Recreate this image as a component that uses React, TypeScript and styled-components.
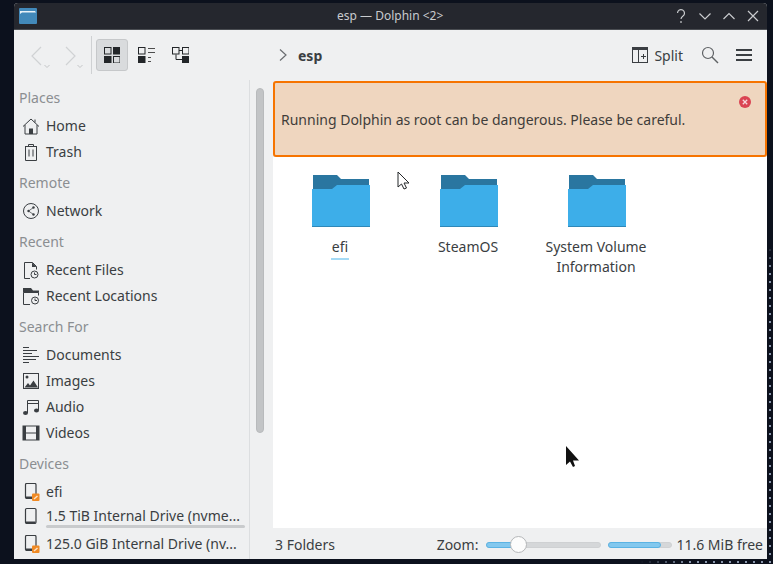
import React from 'react';
import styled, { createGlobalStyle } from 'styled-components';

const Global = createGlobalStyle`
  html, body { margin: 0; padding: 0; background: #0b101c; }
  #root { width: 773px; height: 564px; }
  * { box-sizing: border-box; }
`;

const Desktop = styled.div`
  position: relative;
  width: 773px;
  height: 564px;
  overflow: hidden;
  padding: 3px 6px 5px 14px;
  background-color: #0c111d;
  background-image:
    linear-gradient(180deg, #0c111d 245px, transparent 270px),
    linear-gradient(90deg, #0c111d 640px, transparent 690px),
    radial-gradient(circle at 2px 2px, #8a97ad 0.9px, transparent 1.4px);
  background-size: 100% 100%, 100% 100%, 8px 8px;
  font-family: "Noto Sans", sans-serif;
  font-size: 14px;
  color: #3a3e42;
`;

const Win = styled.div`
  display: flex;
  flex-direction: column;
  width: 753px;
  height: 556px;
  border-radius: 4px 4px 0 0;
  overflow: hidden;
  background: #eff0f1;
`;

const TitleBar = styled.header`
  position: relative;
  flex: 0 0 27px;
  display: flex;
  align-items: center;
  justify-content: space-between;
  padding: 0 5px 0 4px;
  background: #25272e;
  border-bottom: 1px solid #4a4d52;
`;

const TitleText = styled.div`
  position: absolute;
  left: 323px;
  top: 5px;
  font-size: 12px;
  line-height: 16px;
  color: #c9cbce;
`;

const WinButtons = styled.div`
  display: flex;
  gap: 6px;
  align-items: center;
`;

const Toolbar = styled.div`
  flex: 0 0 50px;
  display: flex;
  align-items: center;
  padding: 0 15px 0 14px;
`;

const NavButton = styled.div`
  position: relative;
  width: 32px;
  height: 32px;
  display: flex;
  align-items: center;
  justify-content: center;
`;

const NavGroup = styled.div`
  display: flex;
  width: 63px;
`;

const VSep = styled.div`
  width: 1px;
  height: 38px;
  background: #cfd1d3;
  margin: 0 4px 0 0;
`;

const ToolButton = styled.div<{ $active?: boolean }>`
  width: 32px;
  height: 32px;
  margin-right: 2px;
  display: flex;
  align-items: center;
  justify-content: center;
  border-radius: 3px;
  background: ${p => (p.$active ? '#d9dbdd' : 'transparent')};
  border: 1px solid ${p => (p.$active ? '#c6c8ca' : 'transparent')};
`;

const Crumbs = styled.div`
  display: flex;
  align-items: center;
  margin-left: 80px;
  flex: 1;
  gap: 10px;
`;

const CrumbText = styled.span`
  font-weight: 700;
  font-size: 14px;
  color: #3a3e42;
`;

const SplitButton = styled.div`
  display: flex;
  align-items: center;
  gap: 6px;
  margin-right: 4px;
  font-size: 14px;
`;

const IconSlot = styled.div`
  display: flex;
  align-items: center;
  margin-left: 14px;
`;

const MenuSlot = styled.div`
  display: flex;
  align-items: center;
  margin-left: 17px;
`;

const Body = styled.div`
  flex: 1;
  display: flex;
  min-height: 0;
`;

const Sidebar = styled.aside`
  width: 236px;
  border-right: 1px solid #dcdee0;
  overflow: hidden;
`;

const SectionHead = styled.div`
  height: 33px;
  padding: 8px 0 0 5px;
  line-height: 19px;
  font-size: 14px;
  color: #8b8e91;
`;

const Row = styled.div<{ $lift?: boolean }>`
  position: relative;
  height: 26px;
  display: flex;
  align-items: center;
  padding: ${p => (p.$lift ? '0 0 5px 8px' : '0 0 1px 8px')};
  gap: 6px;
  white-space: nowrap;
`;

const RowIcon = styled.div`
  width: 18px;
  height: 18px;
  flex: none;
  display: flex;
  align-items: center;
  justify-content: center;
`;

const CapacityBar = styled.div`
  position: absolute;
  left: 32px;
  right: 4px;
  bottom: 3px;
  height: 3px;
  border-radius: 2px;
  background: #c9cbcd;
`;

const ScrollTrack = styled.div`
  width: 20px;
  padding: 8px 6px 0 6px;
`;

const ScrollThumb = styled.div`
  width: 8px;
  height: 345px;
  border-radius: 4px;
  background: #c2c4c6;
  border: 1px solid #b8babc;
`;

const Main = styled.main`
  flex: 1;
  margin-left: 3px;
  display: flex;
  flex-direction: column;
  min-width: 0;
`;

const Banner = styled.div`
  position: relative;
  flex: 0 0 76px;
  margin-top: 1px;
  display: flex;
  align-items: center;
  padding: 0 0 0 6px;
  background: #efd6bf;
  border: 2px solid #f67400;
  border-radius: 3px;
`;

const BannerText = styled.span`
  margin-top: 1px;
  color: #3f3d3a;
`;

const CloseBadge = styled.div`
  position: absolute;
  right: 13px;
  top: 12px;
  width: 14px;
  height: 14px;
  display: flex;
`;

const Files = styled.div`
  flex: 1;
  background: #fff;
  display: flex;
  align-items: flex-start;
  padding: 18px 0 0 3px;
`;

const FileItem = styled.div`
  width: 128px;
  display: flex;
  flex-direction: column;
  align-items: center;
`;

const FolderSvg = styled.svg`
  margin-left: 4px;
`;

const FileLabel = styled.div<{ $focus?: boolean }>`
  margin-top: 10px;
  max-width: 116px;
  text-align: center;
  line-height: 20px;
  color: #3a3e42;
  position: relative;
  ${p =>
    p.$focus
      ? `&::after { content: ''; position: absolute; left: -1px; right: -1px; bottom: -3px; height: 2px; background: #a4daf5; }`
      : ''}
`;

const StatusBar = styled.footer`
  flex: 0 0 31px;
  display: flex;
  align-items: center;
  padding: 2px 4px 0 2px;
`;

const StatusText = styled.span`
  flex: 1;
`;

const ZoomLabel = styled.span`
  margin-right: 8px;
`;

const Track = styled.div<{ $w: number }>`
  position: relative;
  width: ${p => p.$w}px;
  height: 6px;
  border-radius: 3px;
  background: #d5d7d9;
  border: 1px solid #cfd1d3;
`;

const Fill = styled.div`
  position: absolute;
  left: -1px;
  top: -1px;
  bottom: -1px;
  border-radius: 3px;
  background: #83c8ee;
  border: 1px solid #5bb3e3;
`;

const Thumb = styled.div`
  position: absolute;
  left: 23px;
  top: -7px;
  width: 17px;
  height: 17px;
  border-radius: 50%;
  background: #fcfcfc;
  border: 1px solid #b5b7b9;
`;

const FreeGroup = styled.div`
  display: flex;
  align-items: center;
  margin-left: 7px;
  gap: 4px;
`;

const Cursor = styled.svg<{ $x: number; $y: number }>`
  position: absolute;
  left: ${p => p.$x}px;
  top: ${p => p.$y}px;
`;

const S = { fill: 'none', stroke: '#3a3e42', strokeWidth: 1 } as const;

const Drive = ({ badge }: { badge?: boolean }) => (
  <svg width="18" height="18" viewBox="0 0 18 18">
    <rect x="3.500" y={badge ? 0.5 : 1.5} width="10.500" height="15" rx="1.200" fill="none" stroke="#3a3e42" strokeWidth="1.200" />
    <path d={badge ? 'M4 13.500h9v2.500H4z' : 'M4 14.500h9.500V17H4z'} fill="#3a3e42" />
    {badge && (
      <>
        <rect x="10" y="10.500" width="7.500" height="7.500" rx="1" fill="#f08a24" />
        <path d="M12 16l3.500-3" stroke="#fde3c8" strokeWidth="1.500" />
      </>
    )}
  </svg>
);

const icons: Record<string, React.ReactNode> = {
  home: (
    <svg width="18" height="18" viewBox="0 0 18 18">
      <path d="M1 9.500 9 2l8 7.500M3 8v9h12V8M13 2.500v3" {...S} />
      <rect x="7" y="11.500" width="4" height="5.500" fill="#3a3e42" />
    </svg>
  ),
  trash: (
    <svg width="18" height="18" viewBox="0 0 18 18">
      <path d="M3 3.500h12M6.500 3.500V1.500h5v2M3.500 3.500v14h11v-14M7 6.500v7M11 6.500v7" {...S} />
    </svg>
  ),
  network: (
    <svg width="18" height="18" viewBox="0 0 18 18">
      <circle cx="9" cy="9" r="7.500" {...S} />
      <path d="M11.500 5.500 6.500 9l5 3.500" stroke="#3a3e42" strokeWidth="0.700" fill="none" />
      <circle cx="6.500" cy="9" r="1.200" fill="#3a3e42" />
      <circle cx="11.500" cy="5.500" r="1.200" fill="#3a3e42" />
      <circle cx="11.500" cy="12.500" r="1.200" fill="#3a3e42" />
    </svg>
  ),
  recentFile: (
    <svg width="18" height="18" viewBox="0 0 18 18">
      <path d="M8 17.500H2.500V1.500h8l4 4v3" {...S} />
      <path d="M10 1.500l4.500 4.500H10z" fill="#3a3e42" />
      <circle cx="12.500" cy="13.500" r="3.500" {...S} />
      <path d="M12.500 11.500v2h2" {...S} />
    </svg>
  ),
  recentLoc: (
    <svg width="18" height="18" viewBox="0 0 18 18">
      <path d="M8 17.500H1.500v-12h15v3" {...S} />
      <path d="M1 1h8l2 2.500h6v2H1z" fill="#3a3e42" />
      <circle cx="13" cy="13.500" r="3.500" {...S} />
      <path d="M13 11.500v2h2" {...S} />
    </svg>
  ),
  docs: (
    <svg width="18" height="18" viewBox="0 0 18 18">
      <path d="M1 1.500h6M1 4.500h14M1 7.500h9M1 10.500h16M1 13.500h13M1 16.500h6" {...S} />
    </svg>
  ),
  images: (
    <svg width="18" height="18" viewBox="0 0 18 18">
      <rect x="1.500" y="1.500" width="15" height="15" {...S} />
      <circle cx="5" cy="5" r="1.500" fill="#3a3e42" />
      <path d="M2.500 15.500 6 11l2 2.500 3.500-5 4.500 7z" fill="#3a3e42" />
    </svg>
  ),
  audio: (
    <svg width="18" height="18" viewBox="0 0 18 18">
      <path d="M5.500 15V2.500h11V12M5.500 5.500h11" {...S} />
      <ellipse cx="3.500" cy="15" rx="2.500" ry="2" fill="#3a3e42" />
      <ellipse cx="14.500" cy="12.500" rx="2.500" ry="2" fill="#3a3e42" />
    </svg>
  ),
  videos: (
    <svg width="18" height="18" viewBox="0 0 18 18">
      <rect x="1" y="2" width="16" height="14" fill="none" stroke="#3a3e42" strokeWidth="1" />
      <path d="M1 2h3v14H1zM14 2h3v14h-3z" fill="#3a3e42" />
      <path d="M4 9h10" {...S} />
    </svg>
  ),
  drive: <Drive />,
  driveLock: <Drive badge />,
};

const Folder = () => (
  <FolderSvg width="60" height="52" viewBox="0 0 60 52">
    <path d="M1 0h24l4 4h28v18H1z" fill="#2a76a0" />
    <path d="M0 14h20l5-4h33v42H0z" fill="#3daee9" />
    <path d="M0 51h58v1H0z" fill="#2f88b8" />
  </FolderSvg>
);

const sidebar: { head: string; rows: { icon: string; label: string; bar?: boolean }[] }[] = [
  { head: 'Places', rows: [{ icon: 'home', label: 'Home' }, { icon: 'trash', label: 'Trash' }] },
  { head: 'Remote', rows: [{ icon: 'network', label: 'Network' }] },
  { head: 'Recent', rows: [{ icon: 'recentFile', label: 'Recent Files' }, { icon: 'recentLoc', label: 'Recent Locations' }] },
  {
    head: 'Search For',
    rows: [
      { icon: 'docs', label: 'Documents' },
      { icon: 'images', label: 'Images' },
      { icon: 'audio', label: 'Audio' },
      { icon: 'videos', label: 'Videos' },
    ],
  },
  {
    head: 'Devices',
    rows: [
      { icon: 'driveLock', label: 'efi' },
      { icon: 'drive', label: '1.5 TiB Internal Drive (nvme...', bar: true },
      { icon: 'driveLock', label: '125.0 GiB Internal Drive (nv...' },
    ],
  },
];

const T = { fill: 'none', stroke: '#c9cbce', strokeWidth: 1.2 } as const;
const Sq = ({ x, y, on }: { x: number; y: number; on?: boolean }) => (
  <rect x={x + 0.5} y={y + 0.5} width="6.500" height="6.500" fill={on ? '#232629' : 'none'} stroke="#232629" />
);

export default function App() {
  return (
    <Desktop>
      <Global />
      <Win>
        <TitleBar>
          <svg width="20" height="18" viewBox="0 0 20 18">
            <path d="M1 2a1 1 0 0 1 1-1h16a1 1 0 0 1 1 1v14a1 1 0 0 1-1 1H2a1 1 0 0 1-1-1z" fill="#4289ba" />
            <path d="M2 4h15l1 1.500H4L2 7z" fill="#e8f2f8" />
          </svg>
          <TitleText>esp — Dolphin &lt;2&gt;</TitleText>
          <WinButtons>
            <svg width="18" height="18" viewBox="0 0 18 18">
              <path d="M5.500 6a3.500 3.500 0 1 1 5.500 3c-1.300.9-2 1.500-2 3M9 14v2" {...T} />
            </svg>
            <svg width="18" height="18" viewBox="0 0 18 18"><path d="M3.500 6.500 9 12l5.500-5.500" {...T} /></svg>
            <svg width="18" height="18" viewBox="0 0 18 18"><path d="M3.500 12 9 6.500l5.500 5.500" {...T} /></svg>
            <svg width="18" height="18" viewBox="0 0 18 18"><path d="M4 4l10 10M14 4 4 14" {...T} /></svg>
          </WinButtons>
        </TitleBar>
        <Toolbar>
          <NavGroup>
            <NavButton>
              <svg width="32" height="32" viewBox="0 0 32 32">
                <path d="M13 8 4 17l9 9" fill="none" stroke="#d0d2d4" strokeWidth="1.200" />
                <path d="M16.500 26l2.500 2.500 2.500-2.500" fill="none" stroke="#c4c6c8" />
              </svg>
            </NavButton>
            <NavButton>
              <svg width="32" height="32" viewBox="0 0 32 32">
                <path d="M6 8l9 9-9 9" fill="none" stroke="#d0d2d4" strokeWidth="1.200" />
                <path d="M17.500 26l2.500 2.500 2.500-2.500" fill="none" stroke="#c4c6c8" />
              </svg>
            </NavButton>
          </NavGroup>
          <VSep />
          <ToolButton $active>
            <svg width="16" height="16" viewBox="0 0 16 16">
              <Sq x={0} y={0} /><Sq x={9} y={0} on /><Sq x={0} y={9} on /><Sq x={9} y={9} />
            </svg>
          </ToolButton>
          <ToolButton>
            <svg width="17" height="16" viewBox="0 0 17 16">
              <Sq x={0} y={0} /><Sq x={0} y={9} on />
              <path d="M10 1.500h7M10 5.500h7M10 10.500h3M10 14.500h3" stroke="#4d4d4d" fill="none" />
            </svg>
          </ToolButton>
          <ToolButton>
            <svg width="17" height="16" viewBox="0 0 17 16">
              <Sq x={0} y={0} /><Sq x={10} y={0} /><Sq x={10} y={9} on />
              <path d="M7 3.500h3M4 7.500v5h6" stroke="#232629" fill="none" />
            </svg>
          </ToolButton>
          <Crumbs>
            <svg width="10" height="14" viewBox="0 0 10 14"><path d="M2 1.500 8 7l-6 5.500" fill="none" stroke="#6b6e71" strokeWidth="1.200" /></svg>
            <CrumbText>esp</CrumbText>
          </Crumbs>
          <SplitButton>
            <svg width="16" height="16" viewBox="0 0 16 16">
              <rect x="0.500" y="0.500" width="15" height="15" fill="none" stroke="#3a3e42" />
              <path d="M0 0h16v3H0z" fill="#3a3e42" />
              <path d="M6.500 3v12M9 9.500h5M11.500 7v5" stroke="#3a3e42" fill="none" />
            </svg>
            Split
          </SplitButton>
          <IconSlot>
            <svg width="18" height="18" viewBox="0 0 18 18">
              <circle cx="7" cy="7" r="5.500" fill="none" stroke="#5f6265" strokeWidth="1.200" />
              <path d="M11 11l6 6" stroke="#5f6265" strokeWidth="1.400" />
            </svg>
          </IconSlot>
          <MenuSlot>
            <svg width="16" height="14" viewBox="0 0 16 14">
              <path d="M0 2h16M0 7h16M0 12h16" stroke="#3a3e42" strokeWidth="1.800" />
            </svg>
          </MenuSlot>
        </Toolbar>
        <Body>
          <Sidebar>
            {sidebar.map(s => (
              <section key={s.head}>
                <SectionHead>{s.head}</SectionHead>
                {s.rows.map(r => (
                  <Row key={r.label} $lift={r.bar}>
                    <RowIcon>{icons[r.icon]}</RowIcon>
                    <span>{r.label}</span>
                    {r.bar && <CapacityBar />}
                  </Row>
                ))}
              </section>
            ))}
          </Sidebar>
          <ScrollTrack>
            <ScrollThumb />
          </ScrollTrack>
          <Main>
            <Banner>
              <BannerText>Running Dolphin as root can be dangerous. Please be careful.</BannerText>
              <CloseBadge>
                <svg width="14" height="14" viewBox="0 0 14 14">
                  <circle cx="7" cy="7" r="6" fill="#da4453" />
                  <path d="M4.800 4.800l4.400 4.400M9.200 4.800l-4.400 4.400" stroke="#f6d8dc" strokeWidth="1.300" />
                </svg>
              </CloseBadge>
            </Banner>
            <Files>
              <FileItem><Folder /><FileLabel $focus>efi</FileLabel></FileItem>
              <FileItem><Folder /><FileLabel>SteamOS</FileLabel></FileItem>
              <FileItem><Folder /><FileLabel>System Volume Information</FileLabel></FileItem>
            </Files>
            <StatusBar>
              <StatusText>3 Folders</StatusText>
              <ZoomLabel>Zoom:</ZoomLabel>
              <Track $w={115}>
                <Fill style={{ width: '33px' }} />
                <Thumb />
              </Track>
              <FreeGroup>
                <Track $w={64}>
                  <Fill style={{ width: '53px' }} />
                </Track>
                <span>11.6 MiB free</span>
              </FreeGroup>
            </StatusBar>
          </Main>
        </Body>
      </Win>
      <Cursor $x={397} $y={171} width="14" height="20" viewBox="0 0 14 20">
        <path d="M1 1v15l3.500-3 2.500 5 2.500-1-2.500-5H12z" fill="#fff" stroke="#232629" strokeWidth="1" />
      </Cursor>
      <Cursor $x={565} $y={445} width="15" height="24" viewBox="0 0 15 24">
        <path d="M1 1v19l4-3.500 3 5.500 2-1-2-5.500h6z" fill="#111" />
      </Cursor>
    </Desktop>
  );
}
